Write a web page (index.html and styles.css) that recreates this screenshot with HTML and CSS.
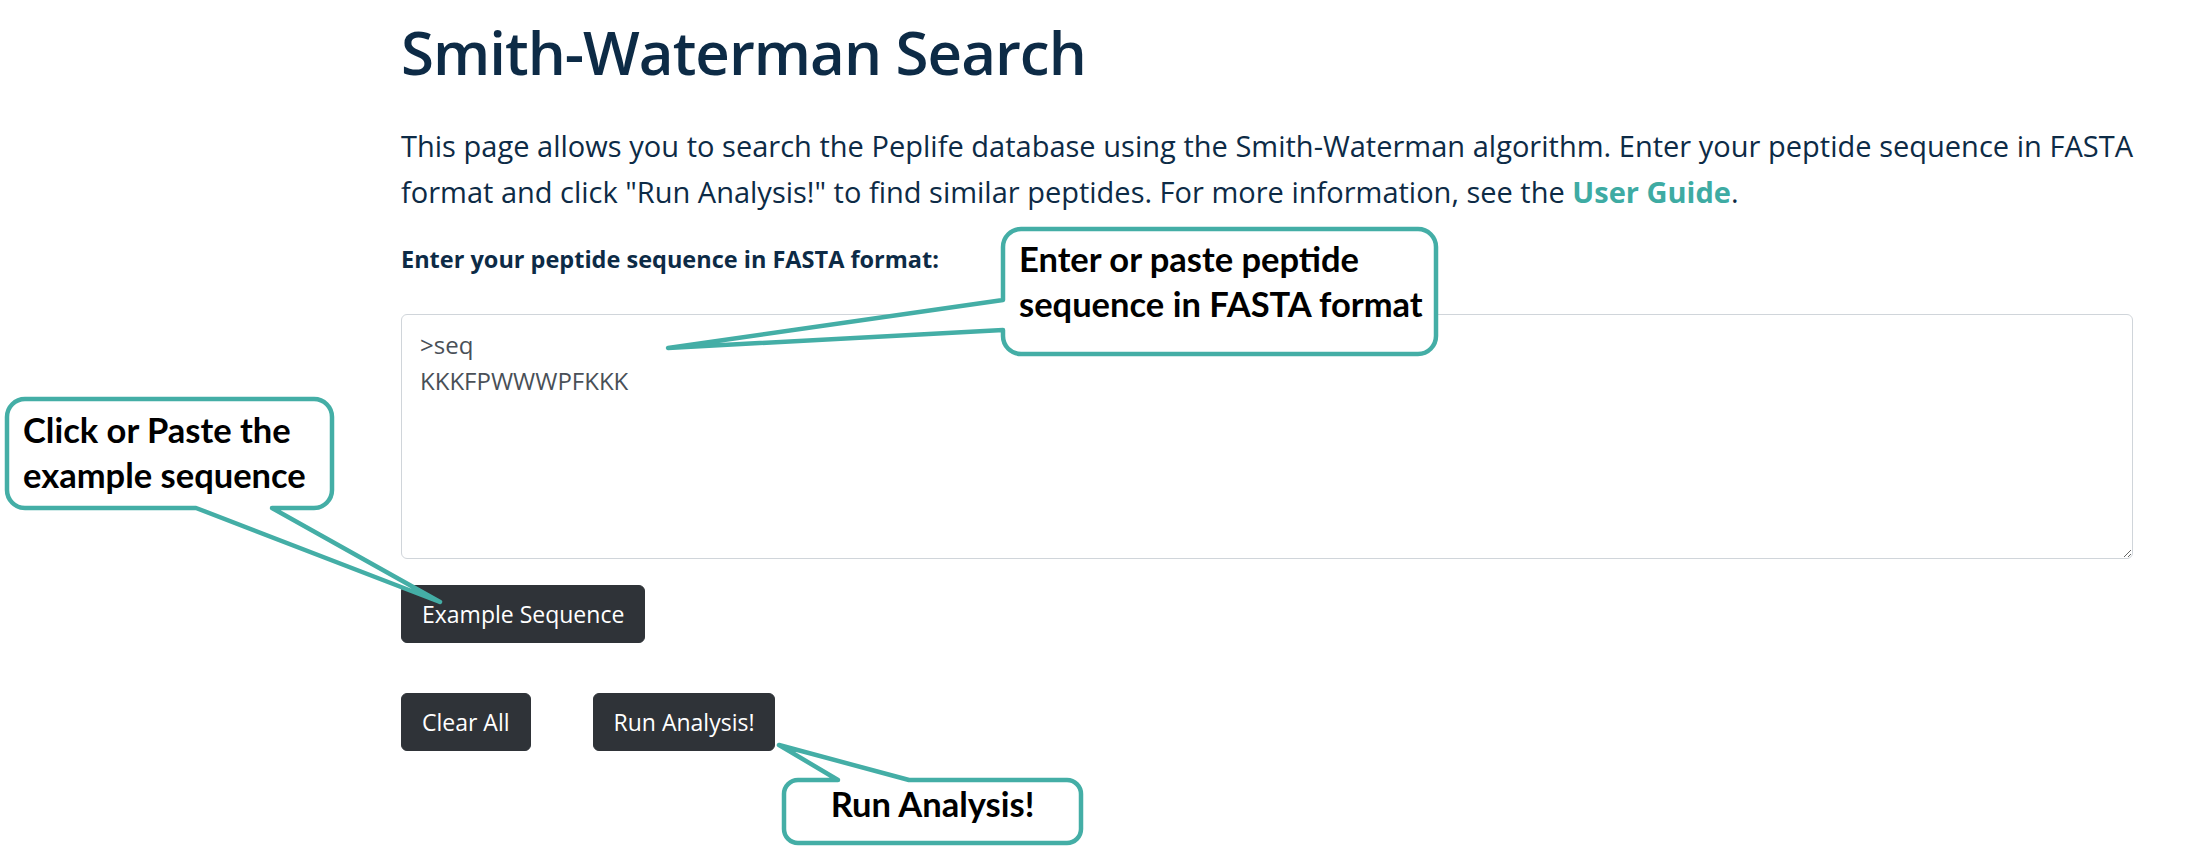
FILE: index.html
```html
<!DOCTYPE html>
<html lang="en">
<head>
<meta charset="utf-8">
<title>Smith-Waterman Search</title>
<link rel="stylesheet" href="styles.css">
</head>
<body>
<main class="page">
  <h1 class="title">Smith-Waterman Search</h1>
  <p class="intro"><span class="intro-line">This page allows you to search the Peplife database using the Smith-Waterman algorithm. Enter your peptide sequence in FASTA</span> format and click "Run Analysis!" to find similar peptides. For more information, see the <a class="guide-link" href="#">User Guide</a>.</p>
  <label class="field-label" for="seq">Enter your peptide sequence in FASTA format:</label>
  <textarea id="seq" class="seq-input">&gt;seq
KKKFPWWWPFKKK</textarea>
  <div class="example-row"><button class="btn">Example Sequence</button></div>
  <div class="action-row"><button class="btn">Clear All</button><button class="btn">Run Analysis!</button></div>
</main>

<svg class="callout-layer" width="2190" height="851" viewBox="0 0 2190 851">
  <path class="bubble" d="M 1021 229 H 1418 A 18 18 0 0 1 1436 247 V 336 A 18 18 0 0 1 1418 354 H 1021 A 18 18 0 0 1 1003 336 V 330 L 668 348 L 1003 300 V 247 A 18 18 0 0 1 1021 229 Z"/>
  <path class="bubble" d="M 25 399 H 314 A 18 18 0 0 1 332 417 V 490 A 18 18 0 0 1 314 508 H 272 L 440 602 L 196 508 H 25 A 18 18 0 0 1 7 490 V 417 A 18 18 0 0 1 25 399 Z"/>
  <path class="bubble" d="M 798 780 H 838 L 779 745 L 909 780 H 1067 A 14 14 0 0 1 1081 794 V 829 A 14 14 0 0 1 1067 843 H 798 A 14 14 0 0 1 784 829 V 794 A 14 14 0 0 1 798 780 Z"/>
</svg>
<div class="callout-text ct-fasta">Enter or paste peptide<br>sequence in FASTA format</div>
<div class="callout-text ct-example">Click or Paste the<br>example sequence</div>
<div class="callout-text ct-run">Run Analysis!</div>
</body>
</html>
```

FILE: styles.css
```css
* { box-sizing: border-box; }

body {
  margin: 0;
  width: 2190px;
  height: 851px;
  position: relative;
  overflow: hidden;
  background: #ffffff;
  color: #0d2b46;
  font-family: "Open Sans", "Noto Sans", sans-serif;
}

.page {
  margin-left: 401px;
  width: 1732px;
  padding-top: 16px;
}

.title {
  margin: 0;
  font-size: 60px;
  font-weight: 600;
  line-height: 72px;
  letter-spacing: -1px;
}

.intro {
  margin: 35px 0 0;
  font-size: 29px;
  line-height: 46px;
  text-align: justify;
}

.intro-line {
  display: block;
  text-align: justify;
  text-align-last: justify;
}

.guide-link {
  color: #3eaba3;
  font-weight: 700;
  text-decoration: none;
}

.field-label {
  display: block;
  margin-top: 28px;
  font-size: 23.5px;
  line-height: 33px;
  font-weight: 700;
}

.seq-input {
  display: block;
  width: 100%;
  height: 245px;
  margin-top: 38px;
  padding: 12px 18px;
  border: 1px solid #d0d5da;
  border-radius: 6px;
  font-family: "Open Sans", "Noto Sans", sans-serif;
  font-size: 24px;
  line-height: 36px;
  color: #495057;
  resize: vertical;
}

.example-row {
  margin-top: 26px;
  display: flex;
}

.action-row {
  margin-top: 50px;
  display: flex;
  gap: 62px;
}

.btn {
  height: 58px;
  padding: 0 20px;
  border: 1px solid #2f3338;
  border-radius: 6px;
  background: #2f3338;
  color: #ffffff;
  font-family: "Open Sans", "Noto Sans", sans-serif;
  font-size: 23px;
  line-height: 36px;
}

.callout-layer {
  position: absolute;
  left: 0;
  top: 0;
  pointer-events: none;
}

.bubble {
  fill: #ffffff;
  stroke: #44aea6;
  stroke-width: 4.5;
  stroke-linejoin: round;
}

.callout-text {
  position: absolute;
  font-family: "Lato", "Liberation Sans", sans-serif;
  font-weight: 700;
  font-size: 34.5px;
  line-height: 45px;
  color: #000000;
  white-space: nowrap;
}

.ct-fasta { left: 1019px; top: 236px; }
.ct-example { left: 23px; top: 407px; }
.ct-run { left: 784px; width: 297px; top: 781px; text-align: center; }
```
